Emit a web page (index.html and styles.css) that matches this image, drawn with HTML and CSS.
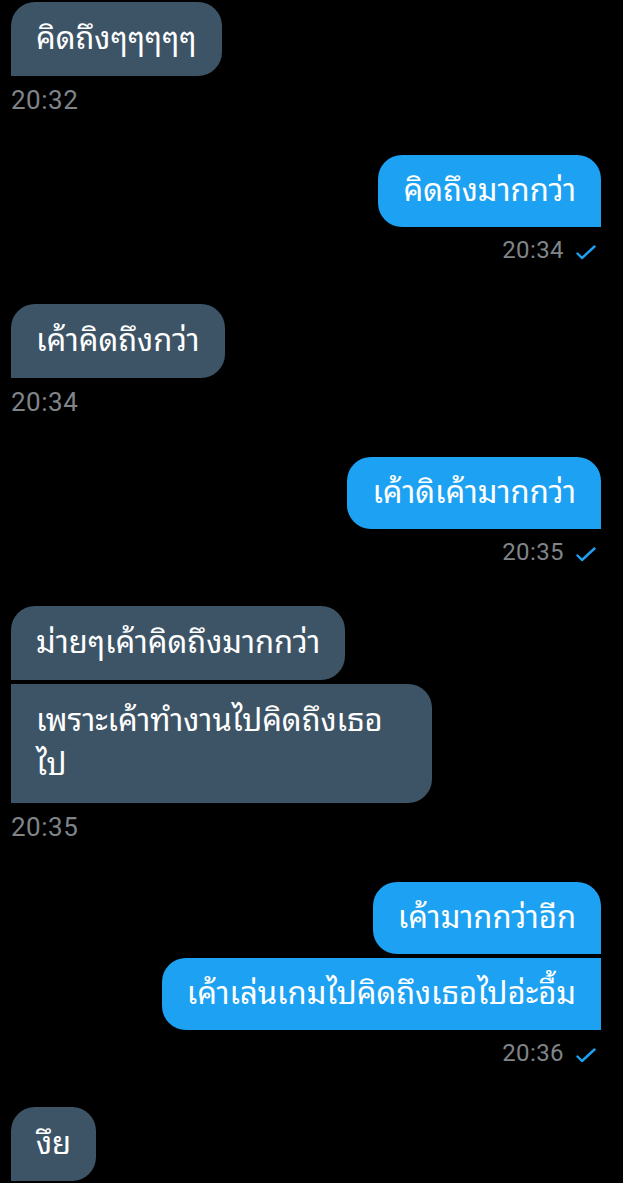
FILE: index.html
```html
<!DOCTYPE html>
<html lang="th">
<head>
  <meta charset="UTF-8">
  <meta name="viewport" content="width=device-width, initial-scale=1.0">
  <title>ข้อความ</title>
  <link rel="stylesheet" href="styles.css">
</head>
<body>

  <div class="chat">

    <div class="group in">
      <div class="bubble last">คิดถึงๆๆๆๆๆ</div>
      <div class="time">20:32</div>
    </div>

    <div class="group out">
      <div class="bubble last">คิดถึงมากกว่า</div>
      <div class="time">20:34 <svg class="check" viewBox="0 0 20 15"><path d="M1.5 8.5 L6 13 L18.5 1.5" /></svg></div>
    </div>

    <div class="group in">
      <div class="bubble last">เค้าคิดถึงกว่า</div>
      <div class="time">20:34</div>
    </div>

    <div class="group out">
      <div class="bubble last">เค้าดิเค้ามากกว่า</div>
      <div class="time">20:35 <svg class="check" viewBox="0 0 20 15"><path d="M1.5 8.5 L6 13 L18.5 1.5" /></svg></div>
    </div>

    <div class="group in">
      <div class="bubble">ม่ายๆเค้าคิดถึงมากกว่า</div>
      <div class="bubble last wide">เพราะเค้าทำงานไปคิดถึงเธอไป</div>
      <div class="time">20:35</div>
    </div>

    <div class="group out">
      <div class="bubble">เค้ามากกว่าอีก</div>
      <div class="bubble last">เค้าเล่นเกมไปคิดถึงเธอไปอ่ะอื้ม</div>
      <div class="time">20:36 <svg class="check" viewBox="0 0 20 15"><path d="M1.5 8.5 L6 13 L18.5 1.5" /></svg></div>
    </div>

    <div class="group in">
      <div class="bubble last">งึย</div>
    </div>

  </div>

</body>
</html>
```

FILE: styles.css
```css
body {
  margin: 0;
  background-color: #000;
  font-family: Roboto, "Noto Sans Thai Looped", Loma, Garuda, "Noto Sans Thai", "Noto Sans", sans-serif;
  overflow: hidden;
}
.chat {
  padding: 2px 22px 0 11px;
  display: flex;
  flex-direction: column;
  gap: 40px;
}
.group {
  display: flex;
  flex-direction: column;
  gap: 4px;
}
.group.in {
  align-items: flex-start;
}
.group.out {
  align-items: flex-end;
}
.bubble {
  box-sizing: border-box;
  max-width: 460px;
  padding: 14px 25px;
  font-size: 31px;
  line-height: 44px;
  color: #fff;
  border-radius: 24px;
}
.in .bubble {
  padding-top: 15px;
  padding-bottom: 15px;
  background-color: #3d5466;
  border-bottom-left-radius: 0;
}
.in .bubble + .bubble {
  border-top-left-radius: 0;
}
.out .bubble {
  background-color: #1da1f2;
  border-bottom-right-radius: 0;
}
.out .bubble + .bubble {
  border-top-right-radius: 0;
}
.in .wide {
  width: 421px;
  padding-right: 47px;
  padding-bottom: 16px;
}
.time {
  display: flex;
  align-items: center;
  gap: 12px;
  color: #7f8488;
}
.in .time {
  margin-top: 5px;
  font-size: 26px;
  line-height: 30px;
  letter-spacing: 0.5px;
}
.out .time {
  margin-top: 5px;
  margin-right: 5px;
  font-size: 24px;
  line-height: 28px;
  letter-spacing: 0.4px;
}
.check {
  width: 20px;
  height: 15px;
  margin-top: 4px;
}
.check path {
  fill: none;
  stroke: #1da1f2;
  stroke-width: 2.4;
  stroke-linecap: round;
  stroke-linejoin: round;
}
```
